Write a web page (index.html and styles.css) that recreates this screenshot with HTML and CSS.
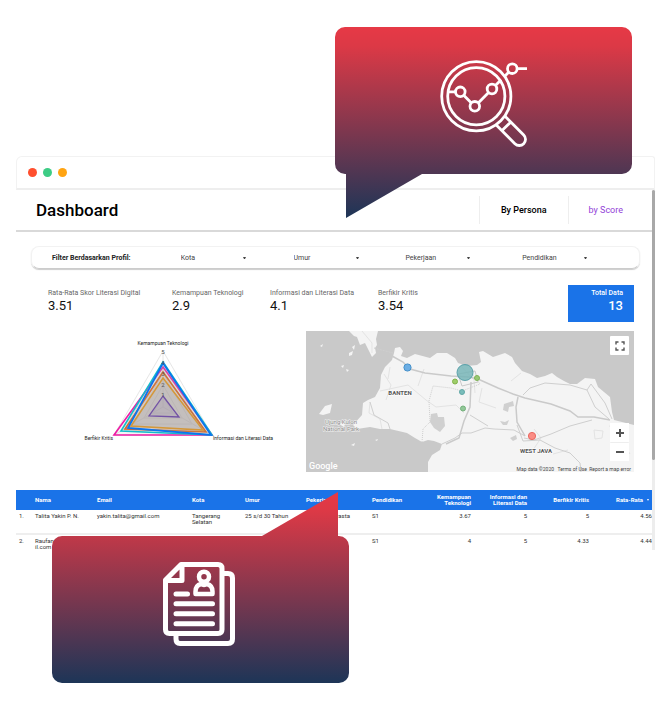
FILE: index.html
```html
<!DOCTYPE html>
<html lang="id">
<head>
<meta charset="utf-8">
<meta name="viewport" content="width=device-width, initial-scale=1">
<title>Dashboard</title>
<link rel="stylesheet" href="styles.css">
</head>
<body>
<div class="stage">
  <main class="window">
    <div class="titlebar"><span class="dot dot-red"></span><span class="dot dot-green"></span><span class="dot dot-amber"></span></div>
    <div class="viewport">
      <div class="page">
        <header class="header">
          <h1>Dashboard</h1>
          <nav class="tabs">
            <a class="tab tab-active" href="#persona">By Persona</a>
            <a class="tab" href="#score">by Score</a>
          </nav>
        </header>

        <form class="filters">
          <span class="filters-title">Filter Berdasarkan Profil:</span>
          <div class="filter"><select aria-label="Kota"><option>Kota</option></select></div>
          <div class="filter"><select aria-label="Umur"><option>Umur</option></select></div>
          <div class="filter"><select aria-label="Pekerjaan"><option>Pekerjaan</option></select></div>
          <div class="filter"><select aria-label="Pendidikan"><option>Pendidikan</option></select></div>
        </form>

        <section class="scores">
          <div class="score"><span class="score-label">Rata-Rata Skor Literasi Digital</span><span class="score-value">3.51</span></div>
          <div class="score"><span class="score-label">Kemampuan Teknologi</span><span class="score-value">2.9</span></div>
          <div class="score"><span class="score-label">Informasi dan Literasi Data</span><span class="score-value">4.1</span></div>
          <div class="score"><span class="score-label">Berfikir Kritis</span><span class="score-value">3.54</span></div>
          <div class="score score-total"><span class="score-label">Total Data</span><span class="score-value">13</span></div>
        </section>

        <section class="charts">
          <svg class="radar" viewBox="0 0 290 141">
            <g fill="none" stroke="#e6e6e6" stroke-width="1">
              <path d="M147 20L196 104H98Z"/><path d="M147 31L186 99H108Z"/><path d="M147 42L176 93H118Z"/><path d="M147 54L166 87H128Z"/><path d="M147 65L157 82H137Z"/>
              <path d="M147 76V20M147 76L196 104M147 76L98 104"/>
            </g>
            <path d="M147 36L196 104H98Z" fill="#aaa" fill-opacity=".12" stroke="#ee1ba5" stroke-width="1.6"/>
            <path d="M147 31L196 104L105 100Z" fill="#aaa" fill-opacity=".15" stroke="#13bccb" stroke-width="1.6"/>
            <path d="M147 41L190 101L109 98Z" fill="#b08d80" fill-opacity=".25" stroke="#d36a2c" stroke-width="1.6"/>
            <path d="M147 47L187 99L115 95Z" fill="#aaa" fill-opacity=".35" stroke="#dc9629" stroke-width="1.6"/>
            <path d="M147 32L195 104L112 97Z" fill="#aaa" fill-opacity=".15" stroke="#0b75ef" stroke-width="1.8"/>
            <path d="M147 65L163 86L133 85Z" fill="#9a90b5" fill-opacity=".25" stroke="#7252a5" stroke-width="1.3"/>
            <g class="radar-scale"><text x="147" y="23">5</text><text x="147" y="34">4</text><text x="147" y="45">3</text><text x="147" y="56">2</text><text x="147" y="66">1</text></g>
            <text x="147" y="14" text-anchor="middle">Kemampuan Teknologi</text>
            <text x="97" y="109" text-anchor="end">Berfikir Kritis</text>
            <text x="197" y="109">Informasi dan Literasi Data</text>
          </svg>

          <div class="map">
            <svg class="map-drawing" viewBox="0 0 328 141">
              <rect width="328" height="141" fill="#c9c9c9"/>
              <g fill="#f4f4f4">
                <path d="M43 0L48 5L51 6L54 14L59 12L63 20L66 26L70 22L69 17L71 14L70 8L72 0Z"/>
                <path d="M88 22L89 17L94 16L97 20L95 25L101 27L109 23L124 27L131 22L141 22L149 27L152 32L161 35L171 34L175 31L173 21L177 20L187 26L199 22L206 26L209 32L216 40L224 43L231 47L239 45L246 42L251 46L258 50L264 53L271 53L279 47L289 48L292 56L304 66L306 81L308 89L328 94V141H122L122 131L126 124L134 119L136 113L128 110L122 109L116 111L109 107L101 102L84 98L74 98L64 96L51 98L47 94L56 84L57 72L62 69L69 66L74 57L75 44L79 36L86 29Z"/>
                <path d="M13 83L19 75L26 73L24 82L17 84ZM33 93L40 90L38 96ZM46 16L49 14L48 19ZM43 22L47 20L46 24L43 25ZM14 15L17 13L16 16ZM35 35L38 34L37 37ZM40 38L43 39L41 41ZM45 114L49 112L48 115ZM69 109L72 108L71 110Z"/>
              </g>
              <g fill="#d0d0d0">
                <path d="M125 83L131 82L132 86L138 86L139 95L134 101L128 97L124 91ZM198 73L207 70L208 75L203 76L202 81L197 79ZM194 90L199 91L203 89L201 94L197 94ZM204 107L210 104L211 108L207 110Z"/>
              </g>
              <g fill="none" stroke="#e3e3e3" stroke-width="1">
                <path d="M74 60L102 54L120 69L130 76L150 74L158 82M118 38L112 55M84 36L82 48M64 71L63 82L74 88L76 98M176 57L173 71L190 77M215 42L205 50M227 119L235 107L228 98M247 123L262 119M288 99L297 100L296 107L289 108Z"/>
                <path d="M56 0L66 12L66 22M78 43L85 54L80 69M155 35L168 49L169 62M303 95L321 99L318 114L324 123"/>
              </g>
              <g fill="none" stroke="#cfcfcf" stroke-width="1">
                <path d="M68 17L87 22" stroke-dasharray="2 1"/>
                <path d="M116 111L117 98L124 91L123 70L127 55L145 57L156 60L174 53L164 40" stroke-dasharray="1 1"/>
                <path d="M64 71L68 84L82 92L84 98M136 113L149 107L156 102H165L179 97L188 98L208 99L219 105M164 84L182 95M217 64L224 57L239 52L264 54L281 59L289 76L303 88M281 59L285 53L299 72L306 88M218 107L228 109L245 103L264 95L286 89"/>
                <path d="M211 94L217 110L234 109L249 117L264 122L274 132L275 141"/>
              </g>
              <g fill="none" stroke="#cacaca" stroke-width="1.500">
                <path d="M86 25L97 31L104 38L119 42L145 45L163 46L172 48L192 57L207 63L219 67L245 73L264 80L272 86L288 86L304 89"/>
                <path d="M165 51L164 76L158 90L153 107L140 113M212 66L210 76L211 91L219 105"/>
                <path d="M152 43L169 40L172 51L156 55Z" stroke-width="1"/>
              </g>
              <g stroke-width="1">
                <circle cx="101.500" cy="36.500" r="3.600" fill="#6caee4" stroke="#4590ca"/>
                <circle cx="159" cy="41.500" r="8" fill="#77b5b7" fill-opacity=".85" stroke="#5aa2aa"/>
                <circle cx="149" cy="50.500" r="2.500" fill="#9ecd69" stroke="#82b34b"/>
                <circle cx="171" cy="47" r="2.500" fill="#98c875" stroke="#7fb356"/>
                <circle cx="156" cy="61" r="2.500" fill="#7abdbb" stroke="#61a9a7"/>
                <circle cx="157" cy="77.500" r="2.500" fill="#91c798" stroke="#73b17b"/>
                <circle cx="226" cy="105" r="3.600" fill="#fb8d85" stroke="#ea6861"/>
              </g>
              <g class="map-region"><text x="94" y="64">BANTEN</text><text x="230" y="122">WEST JAVA</text></g>
              <g class="map-park"><text x="35" y="93">Ujung Kulon</text><text x="35" y="100">National Park</text></g>
              <text class="map-brand" x="3" y="138">Google</text>
              <g class="map-legal"><text x="248" y="140">Map data ©2020</text><text x="281" y="140">Terms of Use</text><text x="325" y="140">Report a map error</text></g>
            </svg>
            <button class="map-button map-full" type="button" aria-label="Fullscreen"><svg viewBox="0 0 10 10"><path d="M1 3.500V1H3.500M6.500 1H9V3.500M9 6.500V9H6.500M3.500 9H1V6.500" fill="none" stroke="#555" stroke-width="1.400"/></svg></button>
            <div class="map-zoom">
              <button class="map-button" type="button" aria-label="Zoom in"><svg viewBox="0 0 10 10"><path d="M1 5H9M5 1V9" stroke="#555" stroke-width="2"/></svg></button>
              <button class="map-button" type="button" aria-label="Zoom out"><svg viewBox="0 0 10 10"><path d="M1 5H9" stroke="#555" stroke-width="2"/></svg></button>
            </div>
          </div>
        </section>

        <div class="table-clip">
          <table>
            <colgroup><col class="c-no"><col class="c-nama"><col class="c-email"><col class="c-kota"><col class="c-umur"><col class="c-kerja"><col class="c-didik"><col class="c-tek"><col class="c-info"><col class="c-kritis"><col class="c-rata"></colgroup>
            <thead><tr><th></th><th>Nama</th><th>Email</th><th>Kota</th><th>Umur</th><th>Pekerjaan</th><th>Pendidikan</th><th class="num">Kemampuan<br>Teknologi</th><th class="num">Informasi dan<br>Literasi Data</th><th class="num">Berfikir Kritis</th><th class="num sorted">Rata-Rata</th></tr></thead>
            <tbody>
              <tr><td>1.</td><td>Talita Yakin P. N.</td><td>yakin.talita@gmail.com</td><td>Tangerang<br>Selatan</td><td>25 s/d 30 Tahun</td><td>Pegawai Swasta<br>/ Karyawan</td><td>S1</td><td class="num">3.67</td><td class="num">5</td><td class="num">5</td><td class="num">4.56</td></tr>
              <tr><td>2.</td><td>Raufan@gma<br>il.com</td><td></td><td></td><td></td><td></td><td>S1</td><td class="num">4</td><td class="num">5</td><td class="num">4.33</td><td class="num">4.44</td></tr>
            </tbody>
          </table>
        </div>
      </div>
      <div class="scrollbar"><div class="scrollbar-thumb"></div></div>
    </div>
  </main>

  <svg class="bubble bubble-top" viewBox="0 0 297 191">
    <defs><linearGradient id="shade" x1="0" y1="0" x2="0" y2="1"><stop offset="0" stop-color="#e63946"/><stop offset=".1" stop-color="#dc3946"/><stop offset="1" stop-color="#1d3557"/></linearGradient></defs>
    <path fill="url(#shade)" d="M10 0H287A10 10 0 0 1 297 10V137A10 10 0 0 1 287 147H87L11 191V147H10A10 10 0 0 1 0 137V10A10 10 0 0 1 10 0Z"/>
    <g fill="none" stroke="#fff" stroke-width="2.800">
      <circle cx="141.300" cy="69.300" r="34.600"/><circle cx="141.300" cy="69.300" r="28.600"/>
      <circle cx="125.300" cy="64.800" r="4.800"/><circle cx="139.800" cy="79.300" r="4.800"/><circle cx="157" cy="62" r="4.800"/><circle cx="177.300" cy="41.700" r="4.800"/>
      <path d="M113 64.800H120.500M128.700 68.200L136.400 75.900M143.200 75.900L153.600 65.400M160.400 58.600L166 53M169.500 49.500L173.900 45.100M182 41.700H192"/>
      <path d="M169.800 89L188.700 107.900A6.200 6.200 0 0 1 179.900 116.700L161 97.800M175.800 95L166.500 104"/>
    </g>
  </svg>

  <svg class="bubble bubble-bottom" viewBox="0 0 297 191">
    <path fill="url(#shade)" d="M10 44H210L286 0V44H287A10 10 0 0 1 297 54V181A10 10 0 0 1 287 191H10A10 10 0 0 1 0 181V54A10 10 0 0 1 10 44Z"/>
    <g fill="none" stroke="#fff" stroke-width="5" stroke-linejoin="round" stroke-linecap="round">
      <path d="M129 72.500H166Q170 72.500 170 76.500V137.500Q170 141.500 166 141.500H117.500Q113.500 141.500 113.500 137.500V88ZM130 74V88.500H115"/>
      <path d="M172 81.500H176Q180.500 81.500 180.500 86V147Q180.500 151.500 176 151.500H128Q124 151.500 124 147V143"/>
      <circle cx="152" cy="84.700" r="5" stroke-width="4.500"/>
      <path d="M143.500 102V99.500Q143.500 93.500 149 92Q152 94 155 92Q160.500 93.500 160.500 99.500V102Z" stroke-width="4.500"/>
      <path d="M124 102H135.500M124 111.800H160.500M124 121.800H160.500M124 131.800H160.500"/>
    </g>
  </svg>
</div>
</body>
</html>
```

FILE: styles.css
```css
* { box-sizing: border-box; }
body { margin: 0; background: #fff; color: #222; font-family: Roboto, "Liberation Sans", sans-serif; }
.stage { position: relative; min-height: 100vh; padding: 156px 15px 0 16px; }

.window { border-radius: 6px 0 0 0; }
.titlebar { display: flex; align-items: center; gap: 6px; height: 34px; padding-left: 11px; border: 1px solid #f2f2f2; border-bottom: 2px solid #eee; border-radius: 6px 3px 0 0; }
.dot { width: 9px; height: 9px; border-radius: 50%; }
.dot-red { background: #ff4f2e; }
.dot-green { background: #3dcc85; }
.dot-amber { background: #ffa412; }

.viewport { display: flex; }
.page { flex: 1; min-width: 0; }
.scrollbar { flex: none; width: 3px; background: #ededed; }
.scrollbar-thumb { height: 75%; border-radius: 2px; background: #a8a8a8; }

.header { display: flex; align-items: center; justify-content: space-between; height: 42px; padding-left: 20px; border-bottom: 2px solid #d9d9d9; }
h1 { margin: 0; font-size: 17px; font-weight: 500; color: #000; }
.tabs { display: flex; }
.tab { padding: 0 29px 0 20px; border-left: 1px solid #eee; font-size: 9px; line-height: 28px; color: #9341d8; text-decoration: none; }
.tab-active { padding: 0 21px; font-weight: 500; color: #000; }

.filters { display: grid; grid-template-columns: 129fr 113fr 112fr 117fr 117fr; align-items: center; height: 23px; margin: 14px 12px 0 15px; padding-left: 20px; border: 1px solid #f2f2f2; border-bottom: 1px solid #ccc; border-radius: 8px; box-shadow: 0 1px 1px #ccc; font-size: 7px; }
.filters-title { font-weight: 700; font-size: 7px; }
.filter { display: flex; align-items: center; }
.filter select { width: 62px; padding: 0; border: 0; appearance: none; background: none; color: #444; font: inherit; }
.filter::after { content: ""; box-sizing: content-box; width: 1px; border: 1px solid transparent; border-top: 2px solid #444; border-bottom: 0; }

.scores { display: grid; grid-template-columns: 124fr 98fr 108fr 190fr 66fr; margin: 16px 18px 0 32px; }
.score { display: flex; flex-direction: column; padding-top: 3px; height: 37px; }
.score-label { font-size: 7px; line-height: 10px; color: #666; white-space: nowrap; }
.score-value { font-size: 13px; line-height: 15px; color: #111; }
.score-total { padding-right: 11px; background: #1a73e8; text-align: right; }
.score-total span { color: #fff; font-weight: 500; }

.charts { display: grid; grid-template-columns: 290fr 328fr; margin: 9px 18px 0 0; }
.charts svg { display: block; width: 100%; }
.radar text { font: 5px Roboto, sans-serif; fill: #222; }
.radar .radar-scale text { font-size: 6px; text-anchor: middle; fill: #555; }
.map { position: relative; }
.map-region text { font: 700 6px Roboto, sans-serif; fill: #555; text-anchor: middle; paint-order: stroke; stroke: #fff; stroke-width: 1px; }
.map-park text { font: 6px Roboto, sans-serif; fill: #8c8c8c; text-anchor: middle; paint-order: stroke; stroke: #f4f4f4; stroke-width: 1px; }
.map-brand { font: 500 9px Roboto, sans-serif; fill: #fff; }
.map-legal text { font: 5px Roboto, sans-serif; fill: #444; text-anchor: end; }
.map-button { display: flex; align-items: center; justify-content: center; width: 19px; height: 19px; padding: 0; border: 0; border-radius: 1px; background: #fff; }
.map .map-button svg { width: 10px; height: 10px; }
.map-full { position: absolute; top: 5px; right: 5px; }
.map-zoom { position: absolute; right: 5px; bottom: 11px; background: #fff; }
.map-zoom .map-button + .map-button { border-top: 1px solid #eee; }

.table-clip { height: 60px; margin-top: 18px; overflow: hidden; }
table { width: 100%; table-layout: fixed; border-collapse: collapse; font-size: 6px; line-height: 6px; }
.c-no { width: 19px; }
.c-nama { width: 62px; }
.c-email { width: 95px; }
.c-kota { width: 53px; }
.c-umur { width: 61px; }
.c-kerja { width: 66px; }
.c-didik { width: 56px; }
.c-tek { width: 43px; }
.c-info { width: 56px; }
.c-kritis { width: 62px; }
.c-rata { width: 63px; }
thead tr { height: 20px; background: #1a73e8; color: #fff; }
th { padding: 0; font-weight: 700; text-align: left; vertical-align: middle; white-space: nowrap; }
td { height: 24px; padding: 3px 0 0; border-bottom: 2px solid #eee; vertical-align: top; white-space: nowrap; color: #333; }
td:first-child { padding-left: 3px; }
th.num, td.num { text-align: right; }
th.sorted { padding-right: 3px; }
.sorted::after { content: ""; display: inline-block; margin-left: 4px; vertical-align: middle; border: 1px solid transparent; border-top: 2px solid #fff; border-bottom: 0; }

.bubble { position: absolute; width: 297px; height: 191px; }
.bubble-top { top: 27px; right: 38px; }
.bubble-bottom { top: 492px; left: 52px; }
```
